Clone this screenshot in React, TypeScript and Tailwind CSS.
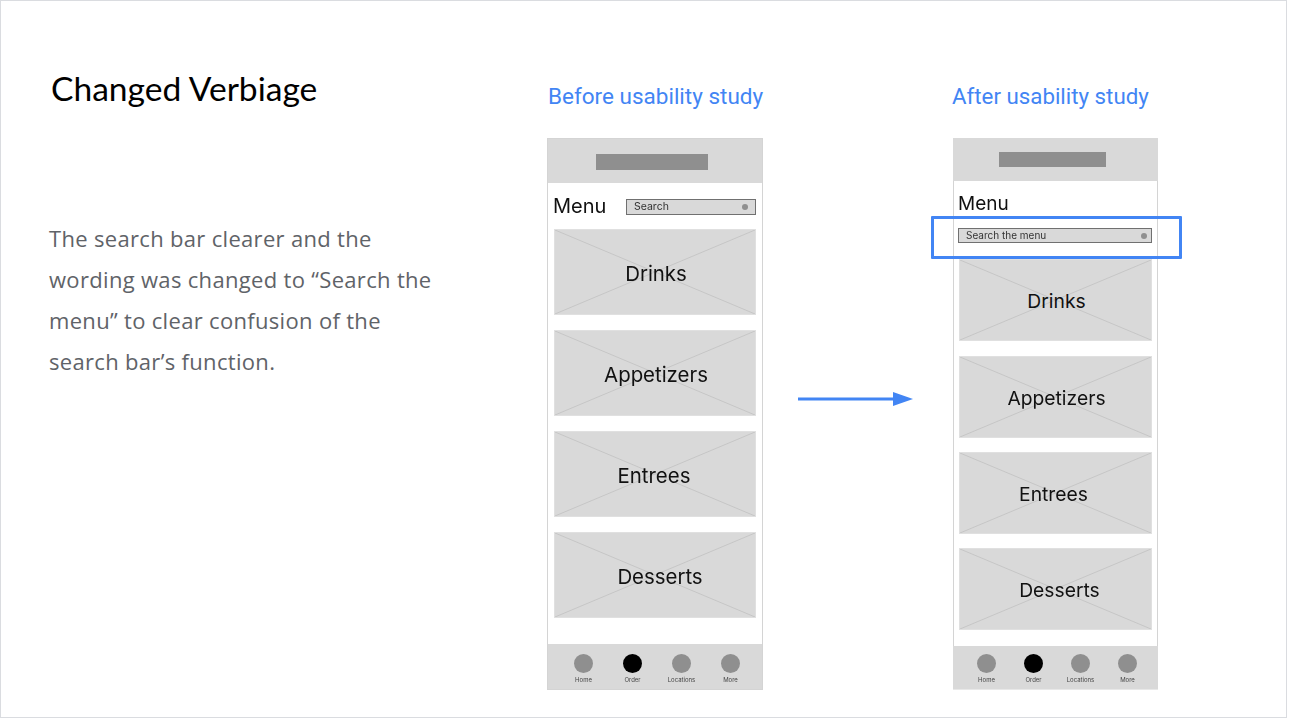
const before = [
  { name: 'Drinks', shift: 'pl-[2px]' },
  { name: 'Appetizers', shift: 'pl-[2px]' },
  { name: 'Entrees', shift: 'pr-[2px]' },
  { name: 'Desserts', shift: 'pl-[10px]' },
]

const after = [
  { name: 'Drinks', shift: 'pl-[2px]' },
  { name: 'Appetizers', shift: 'pl-[2px]' },
  { name: 'Entrees', shift: 'pr-[4px]' },
  { name: 'Desserts', shift: 'pl-[8px]' },
]

const tabs = [
  { label: 'Home', active: false },
  { label: 'Order', active: true },
  { label: 'Locations', active: false },
  { label: 'More', active: false },
]

function Placeholder({ name, className }: { name: string; className: string }) {
  return (
    <div className={`relative flex items-center justify-center bg-[#d9d9d9] border border-[#e0e0e0] font-['Inter',sans-serif] text-[#111] ${className}`}>
      <svg className="absolute inset-0 w-full h-full" viewBox="0 0 100 100" preserveAspectRatio="none">
        <path d="M0 0 L100 100 M100 0 L0 100" stroke="#c6c6c6" strokeWidth="1" vectorEffect="non-scaling-stroke" fill="none" />
      </svg>
      <span className="relative">{name}</span>
    </div>
  )
}

function SearchBar({ text, className }: { text: string; className: string }) {
  return (
    <div className={`flex items-center justify-between bg-[#d9d9d9] border border-[#707070] pl-[7px] font-['Inter',sans-serif] text-[#333] ${className}`}>
      <span>{text}</span>
      <span className="w-[6px] h-[6px] rounded-full bg-[#8f8f8f]" />
    </div>
  )
}

function TabBar({ className, gaps }: { className: string; gaps: string }) {
  return (
    <div className={`flex justify-center bg-[#d9d9d9] ${gaps} ${className}`}>
      {tabs.map((tab) => (
        <div key={tab.label} className="w-[19px] flex flex-col items-center">
          <span className={`w-[19px] h-[19px] shrink-0 rounded-full ${tab.active ? 'bg-black' : 'bg-[#8f8f8f]'}`} />
          <span className="mt-[3px] font-['Inter',sans-serif] text-[6px] leading-[8px] text-[#444] whitespace-nowrap">{tab.label}</span>
        </div>
      ))}
    </div>
  )
}

export default function App() {
  return (
    <div className="w-[1287px] h-[718px] bg-white border border-[#dadce0] flex">
      <div className="w-[546px] shrink-0 pl-[48px]">
        <h1 className="mt-[67px] ml-[2px] font-['Lato',sans-serif] text-[33.6px] leading-[40px] text-black">Changed Verbiage</h1>
        <p className="mt-[110px] w-[392px] font-['Open_Sans',sans-serif] text-[22px] tracking-[0.32px] leading-[41px] text-[#5f6368]">
          The search bar clearer and the wording was changed to “Search the menu” to clear confusion of the search bar’s function.
        </p>
      </div>

      <div className="w-[216px] shrink-0">
        <p className="mt-[81px] ml-[1px] font-['Roboto',sans-serif] text-[22.5px] leading-[28px] text-[#4285f4] whitespace-nowrap">Before usability study</p>
        <div className="mt-[28px] h-[552px] border border-[#d4d4d4] flex flex-col blur-[0.4px]">
          <div className="h-[44px] flex items-center justify-center bg-[#d9d9d9] pr-[7px] pt-[1px]">
            <div className="w-[112px] h-[16px] bg-[#8f8f8f]" />
          </div>
          <div className="h-[46px] flex items-center pl-[5px] pr-[6px]">
            <span className="font-['Inter',sans-serif] text-[20px] text-[#111]">Menu</span>
            <SearchBar text="Search" className="ml-auto mt-[2px] w-[130px] h-[16px] pr-[7px] text-[10.5px]" />
          </div>
          <div className="flex flex-col gap-[15px] px-[6px]">
            {before.map((card) => (
              <Placeholder key={card.name} name={card.name} className={`h-[86px] pt-[4px] text-[20.4px] ${card.shift}`} />
            ))}
          </div>
          <TabBar className="mt-auto h-[45px] pt-[10px] pl-[4px]" gaps="gap-[30px]" />
        </div>
      </div>

      <div className="w-[190px] shrink-0 flex items-center justify-center pt-[80px]">
        <svg width="116" height="14" viewBox="0 0 116 14" className="mr-[5px]">
          <path d="M0 7 H96" stroke="#4285f4" strokeWidth="3" fill="none" />
          <path d="M95 0 L115 7 L95 14 Z" fill="#4285f4" />
        </svg>
      </div>

      <div className="w-[205px] shrink-0">
        <p className="mt-[81px] -ml-[1px] font-['Roboto',sans-serif] text-[22.3px] leading-[28px] text-[#4285f4] whitespace-nowrap">After usability study</p>
        <div className="relative mt-[28px] h-[552px] border-x border-[#d4d4d4] flex flex-col">
          <div className="-mx-px h-[43px] flex items-center justify-center bg-[#d9d9d9] pr-[7px] pb-[1px] blur-[0.4px]">
            <div className="w-[107px] h-[15px] bg-[#8f8f8f]" />
          </div>
          <p className="mt-[10px] ml-[4px] font-['Inter',sans-serif] text-[19px] leading-[26px] text-[#111] blur-[0.4px]">Menu</p>
          <SearchBar text="Search the menu" className="mt-[11px] ml-[4px] w-[194px] h-[15px] pr-[4px] text-[10px] blur-[0.4px]" />
          <div className="mt-[16px] flex flex-col gap-[14px] pl-[5px] pr-[5px] blur-[0.4px]">
            {after.map((card) => (
              <Placeholder key={card.name} name={card.name} className={`h-[82px] pt-[3px] first:mb-[1px] text-[19.3px] ${card.shift}`} />
            ))}
          </div>
          <TabBar className="-mx-px mt-auto h-[44px] pt-[8px] pl-[3px] border-b border-[#e8e8e8] blur-[0.4px]" gaps="gap-[28px]" />
          <div className="absolute left-[-23px] top-[78px] w-[251px] h-[43px] border-[3px] border-[#4285f4] rounded-[1px]" />
        </div>
      </div>
    </div>
  )
}
